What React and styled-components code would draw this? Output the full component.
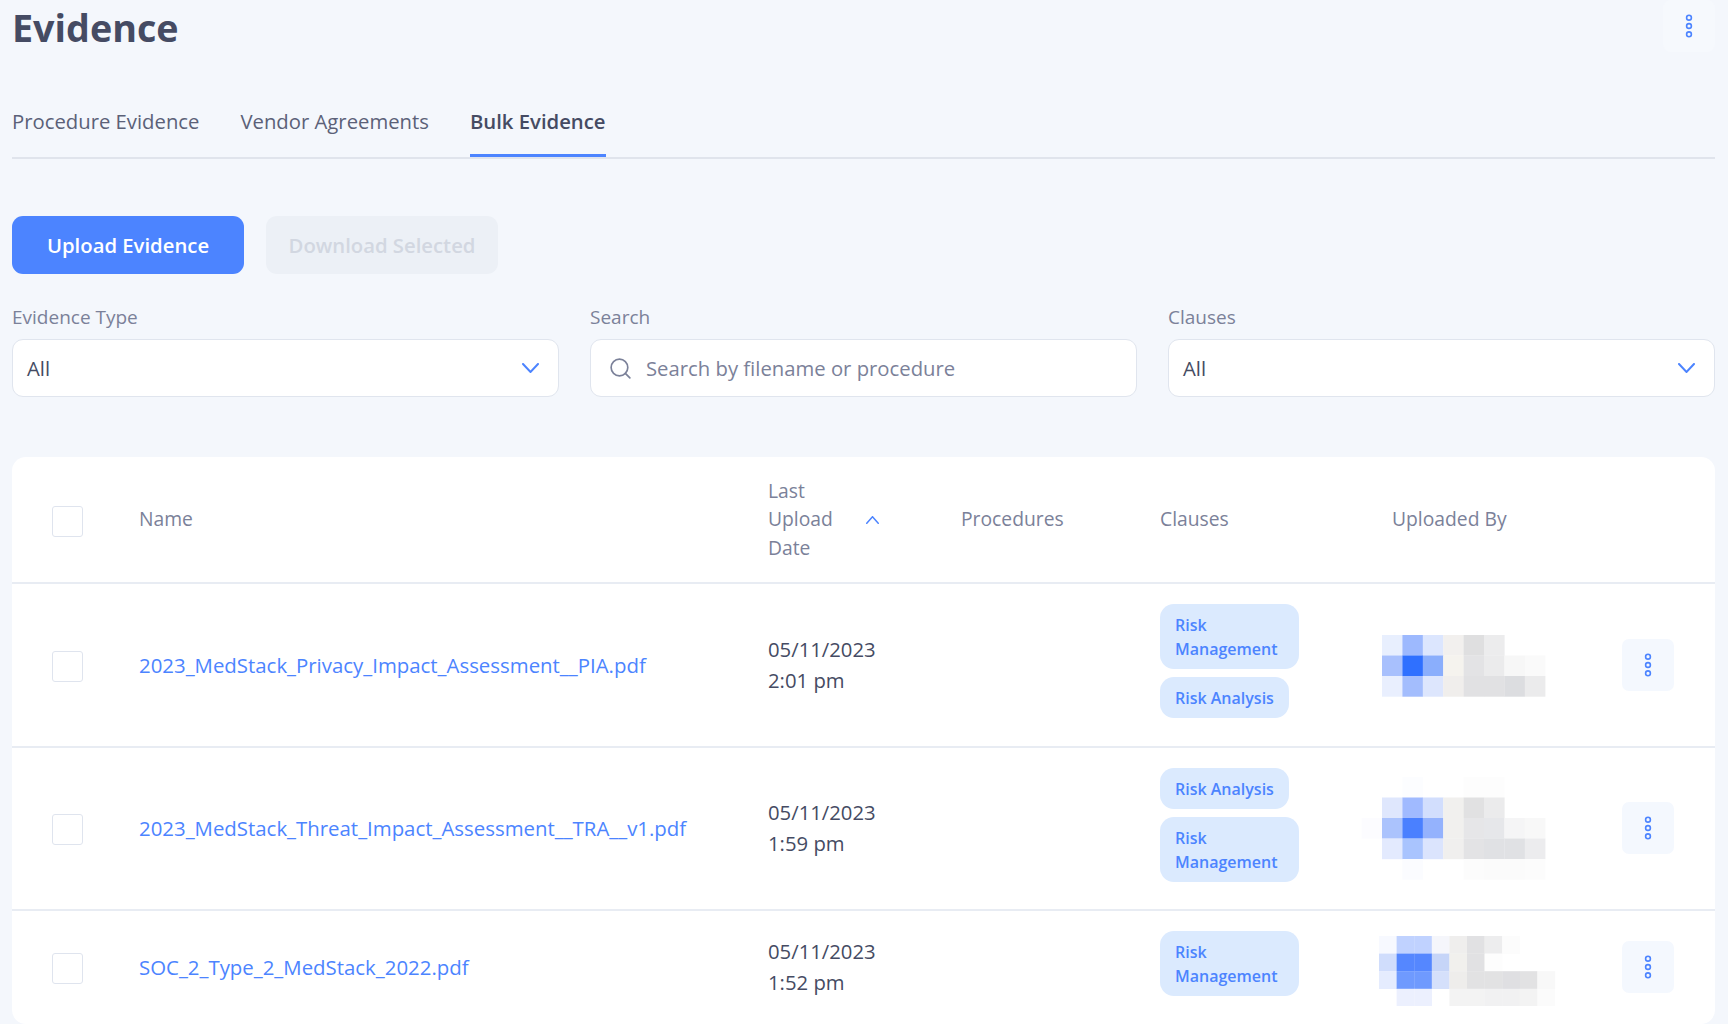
import React from 'react';
import styled, { createGlobalStyle } from 'styled-components';
import { Search } from 'lucide-react';

const blue = '#4c84ff';

const cellsA = {
    w: 20.4, h: 20.5, x: 22, top: 2,
    rows: [
        ['#e8effe', '#9db9fe', '#dce6fe', '#f2f0ee', '#dfdfe0', '#ececed'],
        ['#a8c0fd', '#2f70ff', '#8aaefc', '#f5f3ee', '#e3e3e5', '#ebebec', '#f7f7f7', '#fafafa'],
        ['#e9effe', '#a3bdfd', '#dde6fd', '#f0eeec', '#e1e1e3', '#e1e1e3', '#dcdde0', '#ebebec'],
    ],
};

const cellsB = {
    w: 20.4, h: 20.5, x: 1.6, top: 0,
    rows: [
        [null, null, '#fcfdff', null, null, '#fdfdfd', '#fdfdfd'],
        [null, '#dfe7fd', '#a0baff', '#d2defd', '#f1f0ee', '#e1e1e2', '#ebebec'],
        ['#fcfcff', '#abc3fd', '#4a80ff', '#94b2fd', '#f1f0ee', '#e6e6e8', '#e6e7ea', '#f5f5f6', '#f8f8f8'],
        [null, '#e3eafe', '#a9c4fe', '#dbe4fd', '#f0efee', '#e3e3e5', '#e0e1e4', '#e0e1e4', '#ececee'],
        [null, null, '#fbfcff', null, null, '#fcfcfc', '#fbfbfb', '#fbfbfb', '#fcfcfc'],
    ],
};

const cellsC = {
    w: 17.6, h: 17.6, x: 19, top: 8,
    rows: [
        ['#f7f9ff', '#c0d2ff', '#c0d2ff', '#f5f6fb', '#efeeed', '#e1e1e3', '#ededee', '#fcfcfc'],
        ['#d0ddfc', '#5587ff', '#5587ff', '#c6d5f8', '#f1f0ed', '#e1e1e3', '#fdfdfd'],
        ['#e5ecfe', '#6f9afe', '#6f9afe', '#d5e0fb', '#eeedeb', '#e2e2e3', '#e2e2e3', '#dfdfe2', '#e2e2e3', '#f8f8f8'],
        [null, '#ecf0fe', '#ecf0fe', null, '#f3f3f3', '#f3f3f3', '#f1f1f2', '#f1f1f2', '#f3f3f3', '#fbfbfb'],
    ],
};

const files = [
    {
        name: '2023_MedStack_Privacy_Impact_Assessment__PIA.pdf',
        date: '05/11/2023',
        time: '2:01 pm',
        clauses: ['Risk Management', 'Risk Analysis'],
        avatar: cellsA,
    },
    {
        name: '2023_MedStack_Threat_Impact_Assessment__TRA__v1.pdf',
        date: '05/11/2023',
        time: '1:59 pm',
        clauses: ['Risk Analysis', 'Risk Management'],
        avatar: cellsB,
    },
    {
        name: 'SOC_2_Type_2_MedStack_2022.pdf',
        date: '05/11/2023',
        time: '1:52 pm',
        clauses: ['Risk Management'],
        avatar: cellsC,
    },
];

const Dots = () => (
    <svg width="8" height="24" viewBox="0 0 8 24" fill="none" stroke={blue} strokeWidth="1.6">
        <circle cx="4" cy="3.7" r="2.4" />
        <circle cx="4" cy="12" r="2.4" />
        <circle cx="4" cy="20.3" r="2.4" />
    </svg>
);

const Chevron = ({ up, width = 17, height = 10 }) => (
    <svg width={width} height={height} viewBox="0 0 17 10" fill="none" stroke={blue} strokeWidth="2" strokeLinecap="round" preserveAspectRatio="none">
        <path d={up ? 'M1 9L8.5 1L16 9' : 'M1 1L8.5 9L16 1'} />
    </svg>
);

const Avatar = ({ cells }) => {
    const height = cells.rows.length * cells.h + cells.top;
    return (
        <svg width="200" height={height} viewBox={`0 ${-cells.top} 200 ${height}`}>
            {cells.rows.map((row, r) =>
                row.map((fill, c) =>
                    fill ? (
                        <rect
                            key={`${r}-${c}`}
                            x={cells.x + c * cells.w}
                            y={r * cells.h}
                            width={cells.w + 0.2}
                            height={cells.h + 0.2}
                            fill={fill}
                        />
                    ) : null
                )
            )}
        </svg>
    );
};

const App = () => {
    return (
        <Page>
            <GlobalStyle />
            <Header>
                <Title>Evidence</Title>
                <PageMenu><Dots /></PageMenu>
            </Header>
            <Tabs>
                <Tab>Procedure Evidence</Tab>
                <Tab>Vendor Agreements</Tab>
                <Tab $active>Bulk Evidence</Tab>
            </Tabs>
            <Actions>
                <Button>Upload Evidence</Button>
                <Button $disabled>Download Selected</Button>
            </Actions>
            <Filters>
                <Field>
                    <Label>Evidence Type</Label>
                    <Control>
                        <Value>All</Value>
                        <Chevron />
                    </Control>
                </Field>
                <Field>
                    <Label>Search</Label>
                    <Control $search>
                        <Search size={25} color="#7b8199" strokeWidth={1.6} />
                        <Placeholder>Search by filename or procedure</Placeholder>
                    </Control>
                </Field>
                <Field>
                    <Label>Clauses</Label>
                    <Control>
                        <Value>All</Value>
                        <Chevron />
                    </Control>
                </Field>
            </Filters>
            <Card>
                <HeadRow>
                    <Checkbox />
                    <HeadCell>Name</HeadCell>
                    <HeadCell>
                        <SortLabel>Last Upload Date</SortLabel>
                        <Chevron up width={13} height={8} />
                    </HeadCell>
                    <HeadCell>Procedures</HeadCell>
                    <HeadCell>Clauses</HeadCell>
                    <HeadCell $indent>Uploaded By</HeadCell>
                    <span />
                </HeadRow>
                {files.map((file) => (
                    <Row key={file.name}>
                        <Checkbox />
                        <FileLink>{file.name}</FileLink>
                        <DateCell>
                            {file.date}
                            <br />
                            {file.time}
                        </DateCell>
                        <span />
                        <Chips>
                            {file.clauses.map((clause) => (
                                <Chip key={clause}>{clause}</Chip>
                            ))}
                        </Chips>
                        <Avatar cells={file.avatar} />
                        <RowMenu><Dots /></RowMenu>
                    </Row>
                ))}
            </Card>
        </Page>
    );
};

const GlobalStyle = createGlobalStyle`
    body {
        margin: 0;
        background: #f4f7fc;
        font-family: 'Open Sans', 'Noto Sans', sans-serif;
    }
`;

const Page = styled.div`
    height: 1024px;
    overflow: hidden;
    padding: 0 13px 0 12px;
    background: #f4f7fc;
`;

const Header = styled.div`
    display: flex;
    justify-content: space-between;
    align-items: center;
    height: 52px;
`;

const Title = styled.h1`
    margin: 0;
    padding-top: 4px;
    font-size: 37.7px;
    line-height: 52px;
    font-weight: 700;
    color: #454b63;
`;

const PageMenu = styled.div`
    width: 52px;
    height: 52px;
    display: flex;
    align-items: center;
    justify-content: center;
    border-radius: 8px;
    background: #f6f9fd;
`;

const Tabs = styled.div`
    display: flex;
    gap: 41px;
    margin-top: 55px;
    border-bottom: 2px solid #e0e4ec;
`;

const Tab = styled.div`
    font-size: 20.3px;
    line-height: 28px;
    padding-bottom: 19px;
    font-weight: ${(p) => (p.$active ? 600 : 400)};
    color: ${(p) => (p.$active ? '#454b63' : '#5b6178')};
    border-bottom: 3px solid ${(p) => (p.$active ? blue : 'transparent')};
`;

const Actions = styled.div`
    display: flex;
    gap: 22px;
    margin-top: 57px;
`;

const Button = styled.div`
    width: 232px;
    height: 58px;
    display: flex;
    align-items: center;
    justify-content: center;
    border-radius: 11px;
    font-size: 20.3px;
    font-weight: 600;
    color: ${(p) => (p.$disabled ? '#d2d7e1' : '#ffffff')};
    background: ${(p) => (p.$disabled ? '#ecf0f6' : blue)};
`;

const Filters = styled.div`
    display: grid;
    grid-template-columns: repeat(3, 547px);
    gap: 31px;
    margin-top: 31px;
`;

const Field = styled.div`
    display: flex;
    flex-direction: column;
    gap: 10px;
`;

const Label = styled.div`
    font-size: 19px;
    line-height: 24px;
    font-weight: 500;
    color: #7b8199;
`;

const Control = styled.div`
    height: 58px;
    box-sizing: border-box;
    display: flex;
    align-items: center;
    justify-content: ${(p) => (p.$search ? 'flex-start' : 'space-between')};
    gap: 13px;
    padding: 0 19px 0 ${(p) => (p.$search ? '17px' : '14px')};
    border: 1px solid #e0e5ee;
    border-radius: 11px;
    background: #ffffff;
`;

const Value = styled.span`
    font-size: 20.3px;
    color: #454b63;
`;

const Placeholder = styled.span`
    font-size: 20.3px;
    color: #7b8199;
`;

const Card = styled.div`
    margin-top: 60px;
    height: 567px;
    overflow: hidden;
    border-radius: 14px;
    background: #ffffff;
`;

const rowColumns = `
    display: grid;
    grid-template-columns: 87px 629px 193px 199px 200px 262px 52px;
    align-items: center;
    padding: 0 41px 0 40px;
    border-bottom: 2px solid #e8ecf3;
`;

const HeadRow = styled.div`
    ${rowColumns}
    height: 127px;
    box-sizing: border-box;
`;

const HeadCell = styled.div`
    display: flex;
    align-items: center;
    gap: 32px;
    font-size: 19.3px;
    line-height: 28.5px;
    font-weight: 500;
    color: #7b8199;
    padding-left: ${(p) => (p.$indent ? '32px' : '0')};
`;

const SortLabel = styled.span`
    width: 66px;
`;

const Row = styled.div`
    ${rowColumns}
`;

const Checkbox = styled.div`
    width: 31px;
    height: 31px;
    margin-top: 3px;
    box-sizing: border-box;
    border: 1.5px solid #dfe4ee;
    border-radius: 3px;
    background: #ffffff;
`;

const FileLink = styled.a`
    font-size: 20.4px;
    color: ${blue};
`;

const DateCell = styled.div`
    font-size: 20.3px;
    line-height: 31px;
    color: #454b63;
`;

const Chips = styled.div`
    display: flex;
    flex-direction: column;
    align-items: flex-start;
    padding: 20px 0 19.5px;
`;

const Chip = styled.div`
    max-width: 109px;
    padding: 9px 15px 8px;
    margin-bottom: 8px;
    border-radius: 14px;
    font-size: 16px;
    line-height: 24px;
    font-weight: 600;
    color: ${blue};
    background: #dbeafe;
`;

const RowMenu = styled.div`
    width: 52px;
    height: 52px;
    display: flex;
    align-items: center;
    justify-content: center;
    border-radius: 7px;
    background: #f4f8fe;
`;

export default App;
